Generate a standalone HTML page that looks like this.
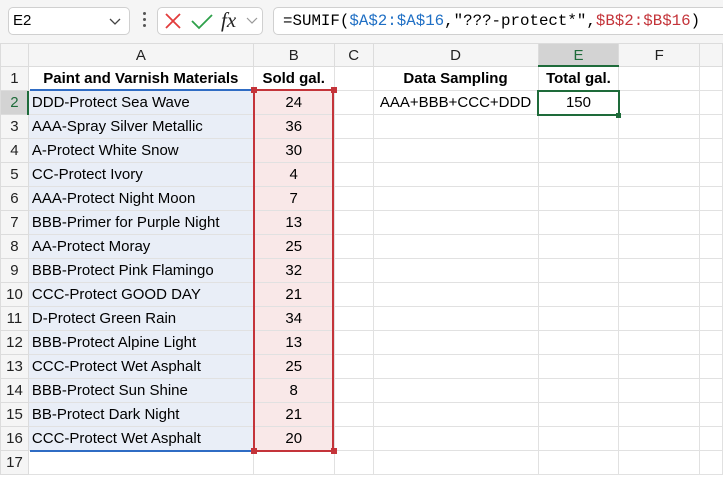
<!DOCTYPE html>
<html><head><meta charset="utf-8"><style>
body{margin:0;width:723px;height:478px;background:#fff;font-family:"Liberation Sans",sans-serif;overflow:hidden;position:relative}
.abs{position:absolute}
table{position:absolute;left:0;top:43px;border-collapse:collapse;table-layout:fixed;font-size:15px;color:#000}
td{border:1px solid #e1e1e1;height:23px;padding:0 3px;white-space:nowrap;overflow:hidden;box-sizing:content-box}
tr.h td{background:#f5f5f5;text-align:center;color:#222;border-color:#dcdcdc;height:22px}
td.rh{background:#f5f5f5;text-align:center;padding:0;color:#222;border-color:#dcdcdc}
td.a{background:#e9eef7}
td.b{background:#f9e8e8;text-align:center}
td.c{text-align:center}
b{font-weight:bold}
</style></head><body>
<div class="abs" style="left:0;top:0;width:723px;height:43px;background:#f5f5f5"></div>
<div class="abs" style="left:8px;top:7px;width:122px;height:28px;background:#fff;border:1px solid #d0d0d0;border-radius:5px;box-sizing:border-box;font-size:15px;line-height:26px;padding-left:4px">E2<svg style="position:absolute;right:8px;top:10px" width="12" height="8"><path d="M1 1L6 6L11 1" stroke="#444" stroke-width="1.3" fill="none"/></svg></div>
<div class="abs" style="left:143px;top:12px;width:3px;height:3px;background:#555;border-radius:2px"></div>
<div class="abs" style="left:143px;top:18px;width:3px;height:3px;background:#555;border-radius:2px"></div>
<div class="abs" style="left:143px;top:24px;width:3px;height:3px;background:#555;border-radius:2px"></div>
<div class="abs" style="left:157px;top:7px;width:106px;height:28px;background:#fff;border:1px solid #d0d0d0;border-radius:5px;box-sizing:border-box"></div>
<svg class="abs" style="left:163px;top:11px" width="20" height="20"><path d="M3 3L17 17M17 3L3 17" stroke="#e23c3c" stroke-width="1.8"/></svg>
<svg class="abs" style="left:190px;top:11px" width="24" height="20"><path d="M2 10L9 17L22 4" stroke="#2ea04a" stroke-width="1.8" fill="none"/></svg>
<div class="abs" style="left:221px;top:6px;font-family:'Liberation Serif',serif;font-style:italic;font-size:21px;line-height:28px;color:#222">fx</div>
<svg class="abs" style="left:246px;top:16px" width="12" height="10"><path d="M1 2L6 7L11 2" stroke="#999" stroke-width="1.2" fill="none"/></svg>
<div class="abs" style="left:273px;top:7px;width:460px;height:28px;background:#fff;border:1px solid #d0d0d0;border-radius:5px;box-sizing:border-box;font-family:'Liberation Mono',monospace;font-size:15.8px;line-height:26px;padding-left:9px;white-space:nowrap">=SUMIF(<span style="color:#1f6fc4">$A$2:$A$16</span>,"???-protect*",<span style="color:#c4343a">$B$2:$B$16</span>)</div>

<table>
<colgroup><col style="width:28px"><col style="width:225px"><col style="width:81px"><col style="width:39px"><col style="width:165px"><col style="width:81px"><col style="width:81px"><col style="width:23px"></colgroup>
<tr class="h"><td></td><td>A</td><td>B</td><td>C</td><td>D</td><td style="background:#d3d3d3;color:#1e6b3a">E</td><td>F</td><td></td></tr>
<tr><td class="rh">1</td><td class="c"><b>Paint and Varnish Materials</b></td><td class="c"><b>Sold gal.</b></td><td></td><td class="c"><b>Data Sampling</b></td><td class="c"><b>Total gal.</b></td><td></td><td></td></tr>
<tr><td class="rh" style="background:#d3d3d3;color:#1e6b3a">2</td><td class="a">DDD-Protect Sea Wave</td><td class="b">24</td><td></td><td class="c">AAA+BBB+CCC+DDD</td><td class="c">150</td><td></td><td></td></tr>
<tr><td class="rh">3</td><td class="a">AAA-Spray Silver Metallic</td><td class="b">36</td><td></td><td></td><td></td><td></td><td></td></tr>
<tr><td class="rh">4</td><td class="a">A-Protect White Snow</td><td class="b">30</td><td></td><td></td><td></td><td></td><td></td></tr>
<tr><td class="rh">5</td><td class="a">CC-Protect Ivory</td><td class="b">4</td><td></td><td></td><td></td><td></td><td></td></tr>
<tr><td class="rh">6</td><td class="a">AAA-Protect Night Moon</td><td class="b">7</td><td></td><td></td><td></td><td></td><td></td></tr>
<tr><td class="rh">7</td><td class="a">BBB-Primer for Purple Night</td><td class="b">13</td><td></td><td></td><td></td><td></td><td></td></tr>
<tr><td class="rh">8</td><td class="a">AA-Protect Moray</td><td class="b">25</td><td></td><td></td><td></td><td></td><td></td></tr>
<tr><td class="rh">9</td><td class="a">BBB-Protect Pink Flamingo</td><td class="b">32</td><td></td><td></td><td></td><td></td><td></td></tr>
<tr><td class="rh">10</td><td class="a">CCC-Protect GOOD DAY</td><td class="b">21</td><td></td><td></td><td></td><td></td><td></td></tr>
<tr><td class="rh">11</td><td class="a">D-Protect Green Rain</td><td class="b">34</td><td></td><td></td><td></td><td></td><td></td></tr>
<tr><td class="rh">12</td><td class="a">BBB-Protect Alpine Light</td><td class="b">13</td><td></td><td></td><td></td><td></td><td></td></tr>
<tr><td class="rh">13</td><td class="a">CCC-Protect Wet Asphalt</td><td class="b">25</td><td></td><td></td><td></td><td></td><td></td></tr>
<tr><td class="rh">14</td><td class="a">BBB-Protect Sun Shine</td><td class="b">8</td><td></td><td></td><td></td><td></td><td></td></tr>
<tr><td class="rh">15</td><td class="a">BB-Protect Dark Night</td><td class="b">21</td><td></td><td></td><td></td><td></td><td></td></tr>
<tr><td class="rh">16</td><td class="a">CCC-Protect Wet Asphalt</td><td class="b">20</td><td></td><td></td><td></td><td></td><td></td></tr>
<tr><td class="rh">17</td><td></td><td></td><td></td><td></td><td></td><td></td><td></td></tr>
</table>
<div class="abs" style="left:538px;top:65px;width:81px;height:2px;background:#1e6b3a"></div>
<div class="abs" style="left:27px;top:91px;width:2px;height:24px;background:#1e6b3a"></div>
<div class="abs" style="left:537px;top:90px;width:83px;height:26px;border:2px solid #1e6b3a;box-sizing:border-box"></div>
<div class="abs" style="left:30px;top:89px;width:222px;height:2px;background:#2f6cc4"></div>
<div class="abs" style="left:30px;top:450px;width:222px;height:2px;background:#2f6cc4"></div>
<div class="abs" style="left:253px;top:89px;width:81px;height:363px;border:2px solid #c4343a;box-sizing:border-box"></div>
<div class="abs" style="left:251px;top:87px;width:6px;height:6px;background:#c4343a"></div>
<div class="abs" style="left:331px;top:87px;width:6px;height:6px;background:#c4343a"></div>
<div class="abs" style="left:251px;top:448px;width:6px;height:6px;background:#c4343a"></div>
<div class="abs" style="left:331px;top:448px;width:6px;height:6px;background:#c4343a"></div>
<div class="abs" style="left:616px;top:113px;width:5px;height:5px;background:#1e6b3a"></div>
</body></html>
